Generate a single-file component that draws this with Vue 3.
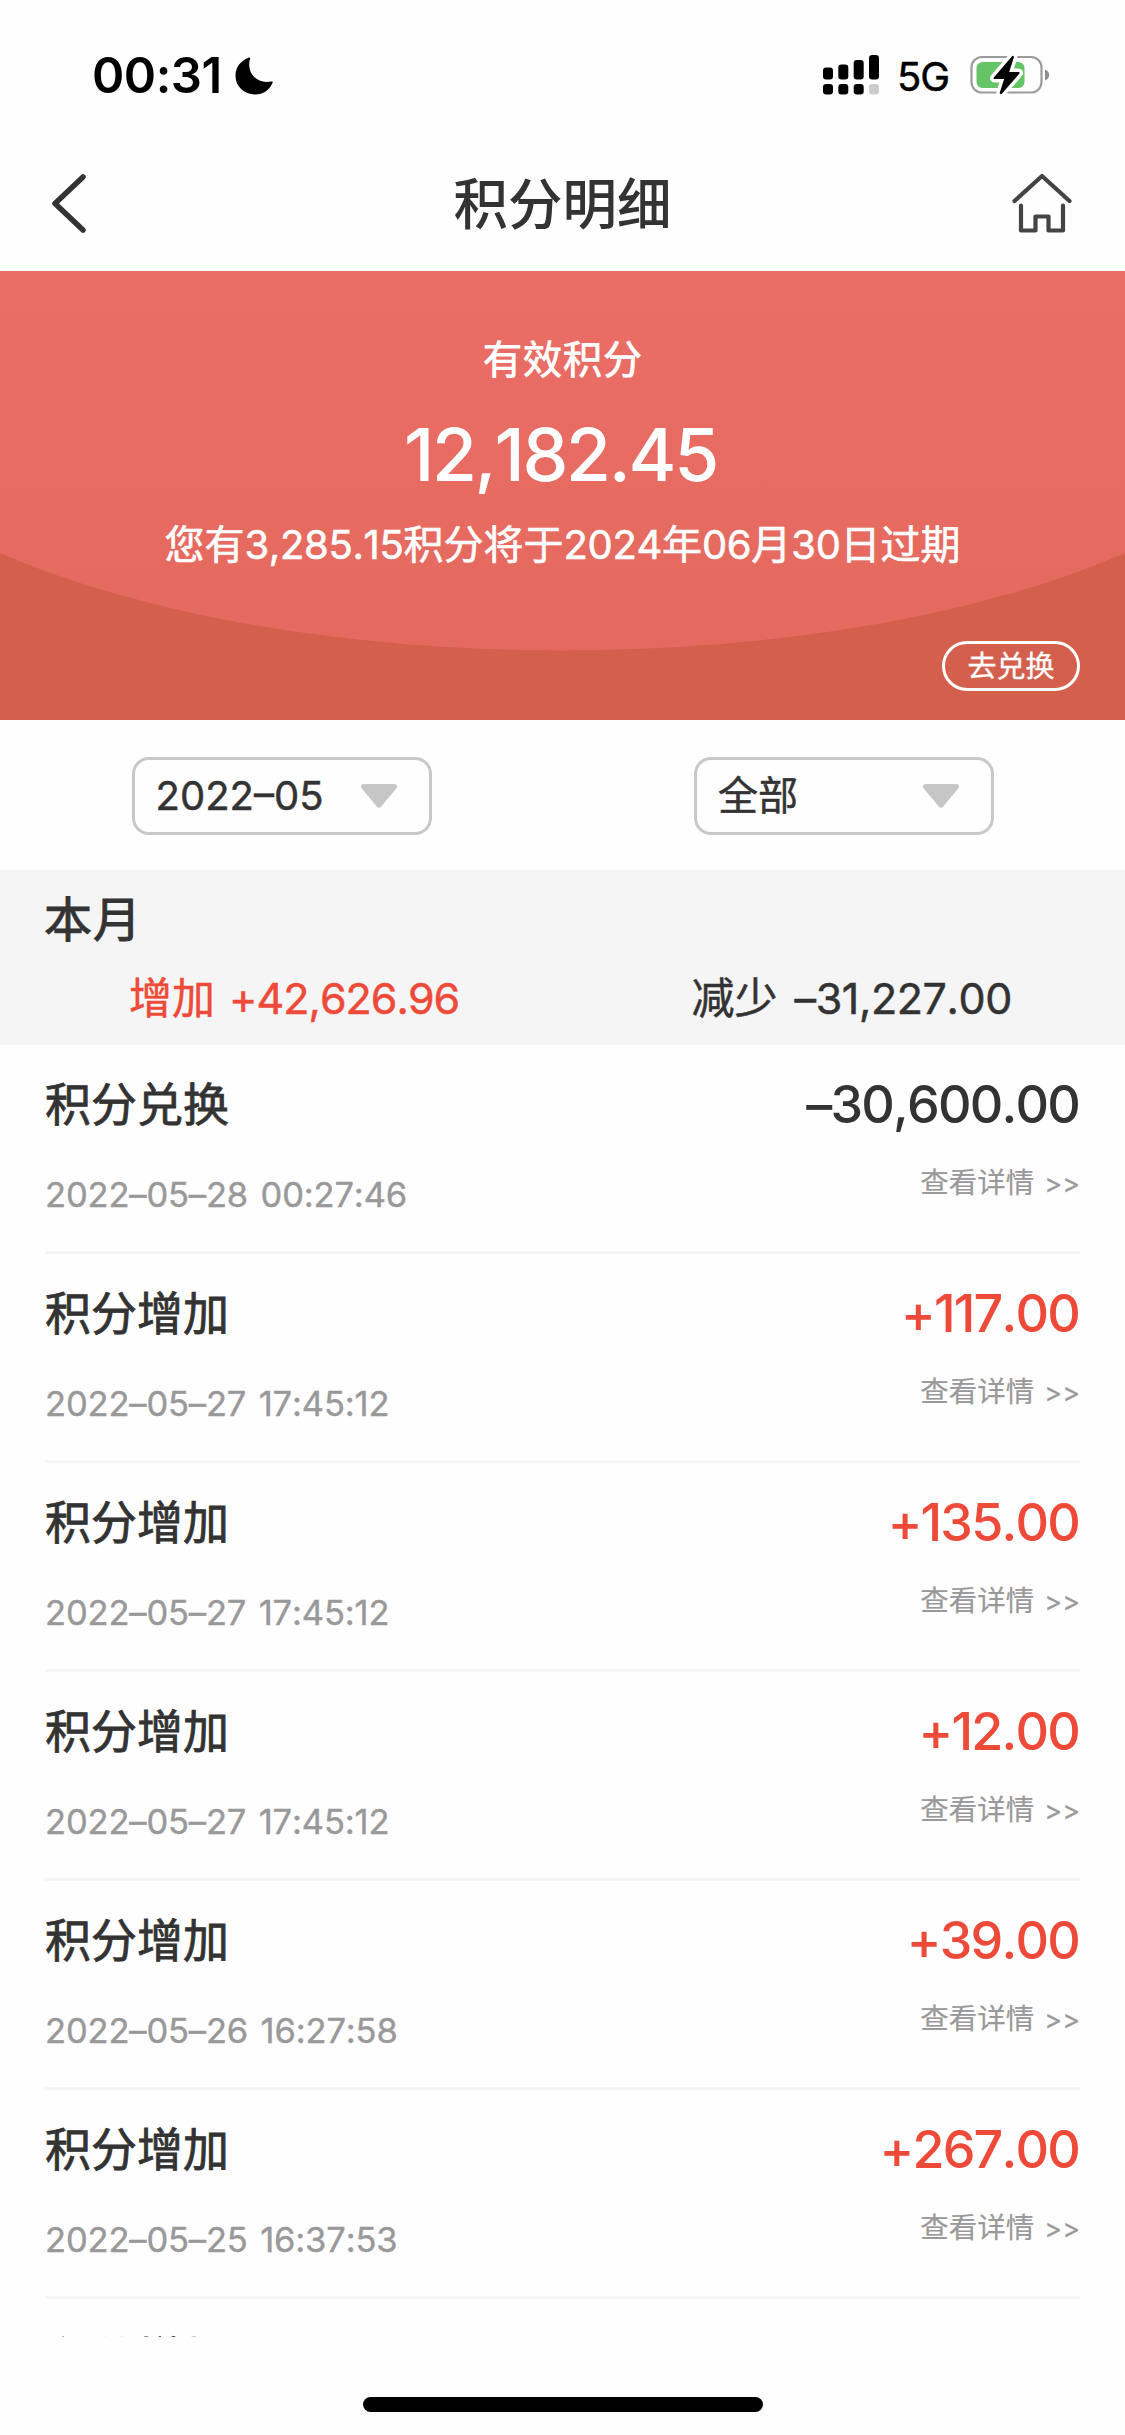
<template>
  <div class="page">
    <div class="status-bar">
      <div class="status-left">
        <span class="time">00:31</span>
        <svg class="moon" viewBox="0 0 38 38">
          <path
            d="M14.2 .6C15.3 .1 15.4 .9 15 2C11.300 14.500 20.500 27.400 36 24.500C37.500 24.200 38.200 24.500 37.500 26C34.500 33 28 37.500 20 37.500C9 37.500 .5 29.500 .5 18.800C.5 10.500 5.500 3.600 14.200 .6Z"
          />
        </svg>
      </div>
      <div class="status-right">
        <svg class="signal" viewBox="0 0 56 40">
          <rect x="0" y="12.500" width="10" height="12" rx="3.200" />
          <rect x="15.300" y="9.500" width="10" height="15" rx="3.200" />
          <rect x="30.700" y="5" width="10" height="19.500" rx="3.200" />
          <rect x="46" y="0" width="10" height="24.500" rx="3.200" />
          <rect x="0" y="29" width="10" height="10.500" rx="3.200" />
          <rect x="15.300" y="29" width="10" height="10.500" rx="3.200" />
          <rect x="30.700" y="29" width="10" height="10.500" rx="3.200" />
          <rect x="46" y="29" width="10" height="10.500" rx="3.200" fill="#ccc" />
        </svg>
        <span class="network">5G</span>
        <svg class="battery" viewBox="0 0 80 42">
          <rect x="1.500" y="3" width="70" height="35.500" rx="10.500" fill="none" stroke="#9b9b9b" stroke-width="2.200" />
          <path d="M75 15.500C80.500 17.500 80.500 24.500 75 26.500Z" fill="#8e8e8e" />
          <rect x="6.500" y="8" width="48" height="26" rx="6" fill="#65c466" />
          <path
            class="bolt-edge"
            d="M41.800 2.500L24 23.200C23.200 24.200 23.600 25 24.800 25H34.200L29.800 38.600C29.400 40.300 31 40.800 32 39.600L49.200 19.800C50 18.800 49.600 18 48.400 18H39.200L43.800 3.500C44.200 1.800 42.800 1.300 41.800 2.500Z"
          />
          <path
            d="M41.800 2.500L24 23.200C23.200 24.200 23.600 25 24.800 25H34.200L29.800 38.600C29.400 40.300 31 40.800 32 39.600L49.200 19.800C50 18.800 49.600 18 48.400 18H39.200L43.800 3.500C44.200 1.800 42.800 1.300 41.800 2.500Z"
          />
        </svg>
      </div>
    </div>

    <header class="nav-bar">
      <svg class="back" viewBox="0 0 36 60">
        <path d="M32 4L4 30.500L32 57" />
      </svg>
      <h1>积分明细</h1>
      <svg class="home" viewBox="0 0 60 60">
        <path d="M2.500 28L30 3L57.500 28" />
        <path d="M9 32.500V57.500H23.500V43.500H36.500V57.500H51V32.500" />
      </svg>
    </header>

    <section class="points-card">
      <svg class="card-bg" viewBox="0 0 1125 449" preserveAspectRatio="none">
        <defs>
          <linearGradient id="cardFill" x1="0" y1="0" x2="0" y2="1">
            <stop offset="0" stop-color="#ea6e66" />
            <stop offset="1" stop-color="#e4695e" />
          </linearGradient>
        </defs>
        <rect width="1125" height="449" fill="#d45f4d" />
        <path d="M0 0H1125V282A744 282 0 0 1 0 282Z" fill="url(#cardFill)" />
      </svg>
      <p class="card-label">有效积分</p>
      <p class="card-total">{{ summary.total }}</p>
      <p class="card-expire">
        您有<span>{{ summary.expiring }}</span>积分将于<span>2024</span>年<span>06</span>月<span>30</span>日过期
      </p>
      <button class="exchange-btn">去兑换</button>
    </section>

    <div class="filters">
      <div v-for="filter in filters" :key="filter" class="filter-cell">
        <div class="filter-select">
          <span>{{ filter }}</span>
          <svg class="caret" viewBox="0 0 36 24">
            <path d="M3 0H33C36 0 37 2.500 35 4.800L20.200 22.500C18.800 24.300 17.200 24.300 15.800 22.500L1 4.800C-1 2.500 0 0 3 0Z" />
          </svg>
        </div>
      </div>
    </div>

    <section class="month">
      <h2>本月</h2>
      <div class="month-totals">
        <p class="plus">增加 <span>{{ summary.added }}</span></p>
        <p class="minus">减少 <span>{{ summary.reduced }}</span></p>
      </div>
    </section>

    <ul class="records">
      <li v-for="(record, index) in records" :key="index" class="record">
        <div class="record-info">
          <h3>{{ record.title }}</h3>
          <time v-if="record.time">{{ record.time }}</time>
        </div>
        <div v-if="record.amount" class="record-side">
          <strong :class="{ plus: record.amount.startsWith('+') }">{{ record.amount }}</strong>
          <a>查看详情 <span>&gt;&gt;</span></a>
        </div>
      </li>
    </ul>

    <div class="home-indicator"></div>
  </div>
</template>

<script setup>
import { ref } from "vue";

const summary = ref({
  total: "12,182.45",
  expiring: "3,285.15",
  added: "+42,626.96",
  reduced: "–31,227.00",
});

const filters = ref(["2022–05", "全部"]);

const records = ref([
  { title: "积分兑换", time: "2022–05–28 00:27:46", amount: "–30,600.00" },
  { title: "积分增加", time: "2022–05–27 17:45:12", amount: "+117.00" },
  { title: "积分增加", time: "2022–05–27 17:45:12", amount: "+135.00" },
  { title: "积分增加", time: "2022–05–27 17:45:12", amount: "+12.00" },
  { title: "积分增加", time: "2022–05–26 16:27:58", amount: "+39.00" },
  { title: "积分增加", time: "2022–05–25 16:37:53", amount: "+267.00" },
  { title: "积分增加" },
]);
</script>

<style>
body {
  margin: 0;
  background: #fff;
}
</style>

<style scoped>
.page {
  width: 1125px;
  height: 2435px;
  overflow: hidden;
  display: flex;
  flex-direction: column;
  background: #fefefe;
  color: #333;
  font-family: Inter, "Noto Sans CJK SC", sans-serif;
  font-kerning: none;
}

h1,
h2,
h3,
p,
ul {
  margin: 0;
  padding: 0;
  font-weight: 400;
}

.status-bar {
  height: 135px;
  padding: 0 75px 0 92px;
  box-sizing: border-box;
  display: flex;
  justify-content: space-between;
  color: #000;
}

.status-left,
.status-right {
  display: flex;
  align-items: flex-start;
}

.time {
  width: 143px;
  margin-top: 46px;
  font-size: 49px;
  line-height: 60px;
  font-weight: 600;
  letter-spacing: -0.5px;
}

.moon {
  width: 38px;
  height: 38px;
  margin-top: 57px;
}

.signal {
  width: 56px;
  height: 40px;
  margin-top: 55px;
}

.network {
  width: 73px;
  margin: 47px 0 0 18px;
  font-size: 40px;
  line-height: 60px;
  letter-spacing: -1px;
  white-space: nowrap;
  -webkit-text-stroke: 0.5px currentColor;
}

.battery {
  width: 80px;
  height: 42px;
  margin-top: 54px;
}

.bolt-edge {
  stroke: #fff;
  stroke-width: 7;
  stroke-linejoin: round;
}

.nav-bar {
  height: 136px;
  padding: 0 53px 0 51px;
  box-sizing: border-box;
  display: flex;
  align-items: center;
  justify-content: space-between;
}

.nav-bar h1 {
  margin-top: 1px;
  font-size: 54.5px;
  line-height: 80px;
  font-weight: 500;
}

.nav-bar path {
  fill: none;
  stroke: #444;
  stroke-linecap: round;
  stroke-linejoin: round;
}

.back {
  width: 36px;
  height: 60px;
  margin-right: 26px;
}

.back path {
  stroke: #333;
  stroke-width: 5.5;
}

.home {
  width: 60px;
  height: 60px;
}

.home path {
  stroke-width: 4.2;
}

.points-card {
  position: relative;
  height: 449px;
  box-sizing: border-box;
  padding: 59px 45px 29px;
  display: flex;
  flex-direction: column;
  align-items: center;
  color: #fff;
}

.card-bg {
  position: absolute;
  inset: 0;
  width: 100%;
  height: 100%;
}

.card-label,
.card-total,
.card-expire,
.exchange-btn {
  position: relative;
}

.card-label {
  font-size: 40px;
  line-height: 60px;
  font-weight: 500;
}

.card-total {
  margin-top: 15px;
  padding-right: 4px;
  font-size: 73px;
  line-height: 100px;
  font-weight: 500;
  letter-spacing: -2.3px;
}

.card-expire {
  margin-top: 10px;
  font-size: 40px;
  line-height: 60px;
  -webkit-text-stroke: 0.6px currentColor;
}

.card-expire span {
  letter-spacing: -0.35px;
}

.exchange-btn {
  width: 138px;
  height: 50px;
  margin-top: auto;
  align-self: flex-end;
  padding: 2px 0 0;
  border: 3px solid #fff;
  border-radius: 25px;
  background: none;
  color: #fff;
  font-family: inherit;
  font-size: 29px;
  line-height: 42px;
  -webkit-text-stroke: 0.3px currentColor;
}

.filters {
  height: 150px;
  display: grid;
  grid-template-columns: 1fr 1fr;
}

.filter-cell {
  padding: 37px 0 0 131.5px;
}

.filter-select {
  width: 300px;
  height: 78px;
  box-sizing: border-box;
  padding: 0 32px 1px 21px;
  display: flex;
  align-items: center;
  justify-content: space-between;
  border: 3px solid #c8c8c8;
  border-radius: 17px;
  font-size: 40px;
  line-height: 60px;
  -webkit-text-stroke: 0.5px currentColor;
}

.caret {
  width: 36px;
  height: 24px;
  fill: #c6c6c6;
}

.month {
  height: 175px;
  background: #f5f5f5;
}

.month h2 {
  padding: 18px 44px 0;
  font-size: 48px;
  line-height: 64px;
  letter-spacing: 1px;
  -webkit-text-stroke: 1px currentColor;
}

.month-totals {
  display: grid;
  grid-template-columns: 1fr 1fr;
  margin-top: 16px;
  font-size: 43px;
  line-height: 60px;
  -webkit-text-stroke: 0.5px currentColor;
}

.month-totals p {
  padding-left: 129px;
}

.month-totals span {
  margin-left: 2px;
  letter-spacing: -1px;
}

.month-totals .minus span {
  margin-left: 5px;
  letter-spacing: -0.4px;
}

.month .plus,
.record .plus {
  color: #ed4a3a;
}

.records {
  height: 1292px;
  padding: 0 45px;
  overflow: hidden;
  list-style: none;
}

.record {
  height: 209px;
  box-sizing: border-box;
  border-bottom: 3px solid #f5f5f5;
  display: flex;
  justify-content: space-between;
}

.record-info,
.record-side {
  display: flex;
  flex-direction: column;
}

.record-info h3 {
  margin-top: 27px;
  font-size: 46px;
  line-height: 64px;
  -webkit-text-stroke: 0.8px currentColor;
}

.record-info time {
  margin-top: 34px;
  font-size: 34.5px;
  line-height: 50px;
  letter-spacing: -0.15px;
  word-spacing: 3px;
  color: #999;
  -webkit-text-stroke: 0.4px currentColor;
}

.record-side {
  align-items: flex-end;
}

.record-side strong {
  margin-top: 26px;
  padding-right: 1px;
  font-size: 52px;
  line-height: 68px;
  font-weight: 500;
  letter-spacing: -1.8px;
}

.record-side a {
  margin-top: 24px;
  font-size: 28.5px;
  line-height: 40px;
  color: #999;
  -webkit-text-stroke: 0.2px currentColor;
}

.record-side a span {
  margin-left: 2px;
  font-size: 27px;
}

.home-indicator {
  width: 400px;
  height: 15px;
  margin: 60px auto 0;
  border-radius: 8px;
  background: #000;
}
</style>
